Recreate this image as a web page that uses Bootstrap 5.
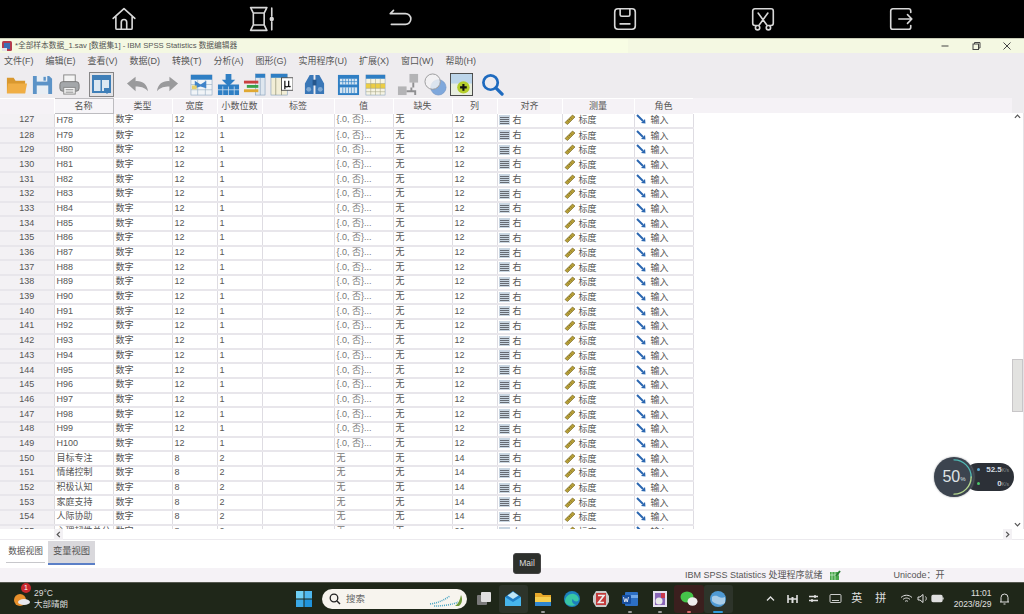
<!DOCTYPE html>
<html lang="zh-CN">
<head>
<meta charset="UTF-8">
<meta name="viewport" content="width=device-width, initial-scale=1">
<title>SPSS 变量视图</title>
<link href="https://cdn.jsdelivr.net/npm/bootstrap@5.3.0/dist/css/bootstrap.min.css" rel="stylesheet">
<style>
  html, body { height: 614px; overflow: hidden; }
  body {
    position: relative;
    width: 1024px;
    background: #fff;
    color: #4a4a4a;
    font-family: "Liberation Sans", "Noto Sans CJK SC", sans-serif;
    font-size: 9px;
    line-height: 1;
  }

  /* tablet key bar */
  .key-bar { height: 38px; background: #000; padding-left: 55px; }
  .key-item { width: 138px; }
  .key-item svg { width: 26px; height: 26px; fill: none; stroke: #d8d8d8; stroke-width: 1.5; stroke-linecap: round; stroke-linejoin: round; }
  .key-split { margin-left: 87px; }

  /* window chrome */
  .title-bar { height: 15px; background: linear-gradient(90deg, #f4f8e2 550px, #f8fde4 550px, #f8fde4 628px, #f4f8e2 628px); border-top: 1px solid #c9cdb8; padding-left: 1px; color: #555; font-size: 7.7px; }
  .title-bar .win-logo { width: 12px; height: 12px; margin-right: 2px; }
  .win-btns { margin-left: auto; margin-right: 2px; }
  .win-btn { width: 31px; }
  .win-btn svg { width: 10px; height: 10px; fill: none; stroke: #444; stroke-width: 1; }

  .app-top { background: #eeecef; height: 45px; }
  .menu-row { height: 17px; padding-left: 4px; gap: 12px; color: #555; font-size: 9px; }
  .tool-row { height: 28px; padding-left: 3px; }
  .tool-i { width: 26.5px; height: 28px; }
  .tool-i svg { width: 23px; height: 23px; }
  .tool-sel { margin-left: 6px; }
  .tool-sel svg { width: 25px; height: 25px; }
  .tool-g1 { margin-left: 9px; }
  .tool-redo { margin-left: 3.5px; }
  .tool-g2 { margin-left: 8px; }
  .tool-g3 { margin-left: 7px; }
  .tool-g4 { margin-left: 7.5px; }
  .tool-g5 { margin-left: 7px; }
  .tool-g6 { margin-left: 4px; }

  /* data grid */
  .grid-wrap { height: 431px; }
  .grid-main { width: 1012px; height: 431px; overflow: hidden; background: #fff; }
  .var-grid { table-layout: fixed; width: 693px; border-collapse: collapse; margin: 0; }
  .var-grid th {
    height: 15px;
    padding: 0;
    font-weight: 400;
    text-align: center;
    background: #f5f2f6;
    border-right: 1px solid #fff;
    color: #555;
    font-size: 9px;
  }
  .var-grid th.name-head { background: #f7f5f8; border: 1px solid #bdbcc0; }
  .head-fill { position: absolute; left: 693px; top: 98px; width: 319px; height: 15px; background: #f5f2f6; }
  .var-grid td {
    height: 14.7px;
    padding: 0 0 1px 2px;
    border-right: 1px solid #dedce2;
    border-bottom: 2px solid #e8e6eb;
    background: #fff;
    white-space: nowrap;
    overflow: hidden;
    color: #555;
    font-size: 9px;
  }
  .var-grid td.row-no { background: #f3f1f4; text-align: center; padding: 0 0 1px 0; color: #555; border-right: 1px solid #dcdade; }
  .var-grid td.val-cell { color: #777; }
  .var-grid td.ico-cell { padding-left: 1px; }
  .cell-ico { width: 11px; height: 10px; margin-right: 3px; vertical-align: -2px; }
  .cell-ico-m { width: 12px; height: 11px; margin-right: 3px; vertical-align: -2px; }

  .scroll-v { width: 12px; height: 431px; background: #fff; padding-top: 15px; border-right: 1px solid #e6e2e6; }
  .scroll-v .arrow { height: 7px; margin-bottom: 1px; }
  .scroll-v svg, .scroll-h svg { width: 7px; height: 7px; fill: none; stroke: #555; stroke-width: 1.4; }
  .scroll-corner { position: absolute; left: 1012px; top: 98px; width: 12px; height: 15px; background: #eeecef; }
  .thumb { height: 53px; background: #e2e2e0; border: 1px solid #c8c6c8; position: absolute; top: 359px; left: 1012px; width: 11px; }

  .scroll-h { height: 11px; background: #fff; padding-left: 54px; border-bottom: 1px solid #eceaee; }
  .scroll-h .end-arrow { margin-left: auto; margin-right: 12px; }
  .scroll-h .arrow-h { width: 9px; height: 11px; background: #f3f1f4; }

  /* sheet tabs */
  .sheet-tabs { height: 28px; padding: 1px 0 0 6px; background: #fff; }
  .sheet-tab { width: 39px; height: 22px; border-bottom: 1px solid #c7c7cb; color: #555; font-size: 8.7px; margin-right: 3px; }
  .sheet-tab.is-active { width: 47px; height: 24px; margin: 0; background: #d9d8dc; border-bottom: 2px solid #5b7fc7; font-size: 9.3px; }

  /* status bar */
  .status-row { height: 14px; background: #f5f2f6; padding-left: 685px; color: #555; font-size: 9px; }
  .status-row svg { width: 12px; height: 11px; margin-left: 6px; }
  .status-uni { margin-left: 53px; }

  /* windows taskbar */
  .task-bar { height: 32px; background: #1f2719; border-top: 1px solid #55584f; color: #e8e8e8; }
  .task-bar > * { flex-shrink: 0; }
  .weather { width: 296px; padding-left: 13px; position: relative; }
  .weather-ico { width: 18px; height: 18px; margin-right: 3px; }
  .weather-txt { font-size: 8.5px; color: #ddd; line-height: 11px; }
  .weather-badge { position: absolute; left: 21px; top: -5px; width: 10px; height: 10px; border-radius: 50%; background: #c8282e; color: #fff; font-size: 7px; }
  .win-start { width: 16px; height: 16px; margin-right: 10px; }
  .search-pill { width: 145px; height: 20px; background: #f7f4ee; border-radius: 10px; color: #666; font-size: 9.5px; padding: 0 3px 0 7px; }
  .search-pill svg { width: 12px; height: 12px; margin-right: 5px; }
  .search-pill .bing { margin: 0 0 0 auto; width: 36px; height: 16px; }
  .task-apps { margin-left: 2.35px; }
  .task-app { width: 29.3px; height: 28px; border-radius: 3px; position: relative; flex-shrink: 0; }
  .task-app svg { width: 18px; height: 18px; }
  .task-app.is-hover { background: #2d342a; }
  .task-app.is-wechat { background: #3b1f1e; }
  .task-app.is-globe { background: #2d342a; }
  .run-dot { position: absolute; bottom: 0; left: 50%; width: 4px; height: 2px; margin-left: -2px; background: #9b9b9b; border-radius: 1px; }
  .run-dot.dot-red { background: #d9686a; }
  .run-dot.dot-blue { width: 10px; margin-left: -5px; background: #2f9bdb; }
  .tray { margin-left: 27px; color: #e0e0e0; }
  .tray > * { flex-shrink: 0; }
  .tray-i { width: 21.5px; font-size: 11px; }
  .tray-i svg { width: 13px; height: 13px; fill: none; stroke: #e0e0e0; stroke-width: 1.3; }
  .tray-wide { width: 26.5px; margin-right: 4.75px; }
  .tray-tight { width: 15.5px; }
  .tray-time { width: 46.25px; text-align: right; font-size: 8.5px; line-height: 11px; white-space: nowrap; }
  .tray-bell { margin-left: 2.25px; }

  /* things floating over the page */
  .mail-tip {
    position: absolute; left: 513px; top: 553px; width: 28px; height: 21px;
    background: #2d302c; color: #ddd; border: 1px solid #444; border-radius: 3px; font-size: 8.5px;
  }
  .net-gauge { position: absolute; left: 934px; top: 456px; width: 80px; height: 41px; }
  .net-pill { position: absolute; left: 30px; top: 7px; width: 50px; height: 28px; background: #2c3037; border-radius: 14px; color: #d5dde2; font-size: 8px; font-weight: 700; }
  .net-line { height: 14px; padding: 0 5px 0 14px; }
  .net-line small { font-size: 5px; font-weight: 400; color: #8a9096; }
  .net-dot { position: absolute; left: 13px; width: 3px; height: 3px; border-radius: 50%; }
  .net-dot.dot-up { top: 5px; background: #5aa9d6; }
  .net-dot.dot-down { top: 19px; background: #4cc46a; }
  .net-circle { position: absolute; left: 0; top: 1px; width: 40px; height: 40px; background: #3c444f; border-radius: 50%; color: #dfe3e6; font-size: 16px; box-shadow: 0 0 2px #8b8f94; }
  .net-circle svg { position: absolute; left: 0; top: 0; width: 40px; height: 40px; fill: none; stroke-width: 1.4; stroke-linecap: round; }
  .net-circle small { font-size: 6px; margin-top: 4px; }
</style>
</head>
<body>

  <!-- tablet keys -->
  <div class="key-bar d-flex align-items-center">
    <div class="key-item d-flex justify-content-center">
      <svg viewBox="0 0 24 24"><path d="M2 11.500 12 2.500l10 9M4.500 10v10.500a1 1 0 0 0 1 1h13a1 1 0 0 0 1-1V10"/><path d="M9.500 21.500V15a2.500 2.500 0 0 1 5 0v6.500"/></svg>
    </div>
    <div class="key-item d-flex justify-content-center">
      <svg viewBox="0 0 24 24"><path d="M1.500 1.500h15M1.500 22.500h15M4 6.500h10M4 17.500h10M4 6.500 1.500 1.500M14 6.500l2.500-5M4 17.500l-2.500 5M14 17.500l2.500 5M4 6.500v11M14 6.500v11M21 2v7.500M21 14.500V22"/><circle cx="21" cy="12" r="1.300" fill="#d8d8d8"/></svg>
    </div>
    <div class="key-item d-flex justify-content-center">
      <svg viewBox="0 0 24 24"><path d="M3 7h14a4.500 4.500 0 0 1 0 10H4M3 7l3-3"/></svg>
    </div>
    <div class="key-item key-split d-flex justify-content-center">
      <svg viewBox="0 0 24 24"><rect x="2.500" y="2.500" width="19" height="19" rx="3"/><path d="M7.500 2.500v5.500a1.500 1.500 0 0 0 1.500 1.500h6A1.500 1.500 0 0 0 16.500 8V2.500M7.500 16.500h9"/></svg>
    </div>
    <div class="key-item d-flex justify-content-center">
      <svg viewBox="0 0 24 24"><path d="M6 18H4.500a2 2 0 0 1-2-2V4.500a2 2 0 0 1 2-2h15a2 2 0 0 1 2 2V16a2 2 0 0 1-2 2H18M7.500 6.500l8 11M16.500 6.500l-8 11"/><circle cx="7" cy="20" r="2"/><circle cx="17" cy="20" r="2"/></svg>
    </div>
    <div class="key-item d-flex justify-content-center">
      <svg viewBox="0 0 24 24"><path d="M21 6V4.500a2 2 0 0 0-2-2H4.500a2 2 0 0 0-2 2v15a2 2 0 0 0 2 2H19a2 2 0 0 0 2-2V18M10 12h12M18 8l4 4-4 4"/></svg>
    </div>
  </div>

  <!-- title bar -->
  <div class="title-bar d-flex align-items-center">
    <svg class="win-logo" viewBox="0 0 12 12"><rect x="1" y="1" width="10" height="10" rx="1.500" fill="#b33a4e"/><rect x="3" y="3" width="6" height="6" fill="#3b6fb5"/><rect x="1" y="8" width="5" height="3" fill="#e3e3ea"/></svg>
    <span>*全部样本数据_1.sav [数据集1] - IBM SPSS Statistics 数据编辑器</span>
    <div class="win-btns d-flex">
      <span class="win-btn d-flex justify-content-center"><svg viewBox="0 0 10 10"><path d="M1.500 5h7"/></svg></span>
      <span class="win-btn d-flex justify-content-center"><svg viewBox="0 0 10 10"><rect x="2" y="3" width="5.500" height="5.500"/><path d="M3.500 3V1.500H9V7H7.500"/></svg></span>
      <span class="win-btn d-flex justify-content-center"><svg viewBox="0 0 10 10"><path d="M1.500 1.500l7 7M8.500 1.500l-7 7"/></svg></span>
    </div>
  </div>

  <div class="app-top">
    <div class="menu-row d-flex align-items-center">
      <span>文件(F)</span><span>编辑(E)</span><span>查看(V)</span><span>数据(D)</span><span>转换(T)</span><span>分析(A)</span><span>图形(G)</span><span>实用程序(U)</span><span>扩展(X)</span><span>窗口(W)</span><span>帮助(H)</span>
    </div>
    <div class="tool-row d-flex">
      <div class="tool-i d-flex align-items-center justify-content-center">
        <svg viewBox="0 0 24 24"><path d="M2 5h7l2 3h10v13H2z" fill="#d9982f"/><path d="M2 21l1-10h20l-2 10z" fill="#f0ae45"/></svg>
      </div>
      <div class="tool-i d-flex align-items-center justify-content-center">
        <svg viewBox="0 0 24 24"><path d="M2 3h17l3 3v16H2z" fill="#5c93c7"/><rect x="6" y="3" width="11" height="6" fill="#e8eef4"/><rect x="13" y="4" width="2.500" height="4" fill="#5c93c7"/><rect x="6" y="13" width="12" height="9" fill="#e8eef4"/></svg>
      </div>
      <div class="tool-i d-flex align-items-center justify-content-center">
        <svg viewBox="0 0 24 24"><rect x="6" y="2" width="12" height="8" fill="#f4f4f4" stroke="#888"/><rect x="2" y="9" width="20" height="10" rx="3" fill="#a4a7aa" stroke="#777"/><rect x="6" y="15" width="12" height="7" fill="#f4f4f4" stroke="#888"/><path d="M8 17.500h8M8 20h8" stroke="#888"/></svg>
      </div>
      <div class="tool-i tool-sel d-flex align-items-center justify-content-center">
        <svg viewBox="0 0 25 25"><rect x=".5" y=".5" width="24" height="24" fill="#e3e3e6" stroke="#222" stroke-dasharray="1 1"/><rect x="3" y="3" width="19" height="18" fill="#3f7fb8"/><rect x="5" y="8" width="6.500" height="11" fill="#dbe8f2"/><rect x="13" y="8" width="7" height="11" fill="#dbe8f2"/><path d="M15 16h6v3l-3 3-3-3z" fill="#3f7fb8"/></svg>
      </div>
      <div class="tool-i tool-g1 d-flex align-items-center justify-content-center">
        <svg viewBox="0 0 24 24"><path d="M1 11l9-7v4.500c7-.5 12 3 13 10.500-4-4.500-8-5-13-5V19z" fill="#9a9a9c"/></svg>
      </div>
      <div class="tool-i tool-redo d-flex align-items-center justify-content-center">
        <svg viewBox="0 0 24 24"><path d="M23 11l-9-7v4.500C7 8 2 11.500 1 19c4-4.500 8-5 13-5V19z" fill="#9a9a9c"/></svg>
      </div>
      <div class="tool-i tool-g2 d-flex align-items-center justify-content-center">
        <svg viewBox="0 0 24 24"><rect x="1" y="2" width="22" height="21" fill="#f1f4f7" stroke="#8aa4bf" stroke-width=".6"/><rect x="1" y="2" width="22" height="5" fill="#2f7fc4"/><path d="M8 7v16M16 7v16M1 12h22M1 17.500h22" stroke="#9db4c8" stroke-width=".7"/><path d="M5 8l6 4 6-4v8l-6-2-6 2z" fill="#3f83c9"/><rect x="2" y="13" width="5" height="4" fill="#e6cf6a"/></svg>
      </div>
      <div class="tool-i d-flex align-items-center justify-content-center">
        <svg viewBox="0 0 24 24"><rect x="1" y="12" width="22" height="11" fill="#2f7fc4"/><path d="M1 17.500h22M6 14v9M12 14v9M18 14v9" stroke="#cfe0ee" stroke-width=".8"/><path d="M9 1h6v6h4l-7 7-7-7h4z" fill="#2f7fc4"/></svg>
      </div>
      <div class="tool-i d-flex align-items-center justify-content-center">
        <svg viewBox="0 0 24 24"><rect x="13" y="1" width="10" height="22" fill="#dfe7ef" stroke="#7e9ab6" stroke-width=".6"/><rect x="13" y="1" width="10" height="4" fill="#2f7fc4"/><path d="M1 8h15v3H1z" fill="#c9403f"/><path d="M4 12.500h12v3H4z" fill="#39a14a"/><path d="M1 17h15v3H1z" fill="#e0a832"/><path d="M18 5v18" stroke="#7e9ab6" stroke-width=".6"/></svg>
      </div>
      <div class="tool-i d-flex align-items-center justify-content-center">
        <svg viewBox="0 0 24 24"><rect x="1" y="1" width="17" height="22" fill="#f2eed6" stroke="#7e9ab6" stroke-width=".6"/><rect x="1" y="1" width="17" height="4" fill="#2f7fc4"/><path d="M6 5v18M12 5v18" stroke="#8c8c6d" stroke-width=".7"/><rect x="12" y="5" width="12" height="13" fill="#fff" stroke="#333" stroke-width=".8"/><path d="M15.500 17V8M15.500 13c0 2 4 2 4 0V8M19.500 13c0 1.500 1 1.500 2 1" fill="none" stroke="#111" stroke-width="1.300"/></svg>
      </div>
      <div class="tool-i tool-g3 d-flex align-items-center justify-content-center">
        <svg viewBox="0 0 24 24"><path d="M7 2h4v20H2V11zM13 2h4l5 9v11h-9z" fill="#3a77b7"/><rect x="10" y="7" width="4" height="6" fill="#26578c"/><circle cx="6" cy="17" r="2.500" fill="#7fa9d3"/><circle cx="18" cy="17" r="2.500" fill="#7fa9d3"/></svg>
      </div>
      <div class="tool-i tool-g4 d-flex align-items-center justify-content-center">
        <svg viewBox="0 0 24 24"><rect x="1" y="2" width="22" height="21" fill="#2f7fc4"/><rect x="3" y="6" width="18" height="6" fill="#d7e6f2"/><path d="M6 6v6M9 6v6M12 6v6M15 6v6M18 6v6M3 9h18" stroke="#2f7fc4" stroke-width=".7"/><rect x="3" y="15" width="18" height="6" fill="#d7e6f2"/><path d="M6 15v6M9 15v6M12 15v6M15 15v6M18 15v6" stroke="#2f7fc4" stroke-width=".7"/></svg>
      </div>
      <div class="tool-i d-flex align-items-center justify-content-center">
        <svg viewBox="0 0 24 24"><rect x="2" y="2" width="20" height="21" fill="#f6f4e4" stroke="#8aa4bf" stroke-width=".6"/><rect x="2" y="2" width="20" height="4" fill="#2f7fc4"/><rect x="2" y="11" width="20" height="5" fill="#ecce45"/><path d="M7 6v17M12 6v17M17 6v17M2 11h20M2 16h20M2 19.500h20" stroke="#a7a789" stroke-width=".6"/></svg>
      </div>
      <div class="tool-i tool-g5 d-flex align-items-center justify-content-center">
        <svg viewBox="0 0 24 24"><rect x="13" y="1" width="9" height="9" fill="#b4b4b6"/><rect x="1" y="14" width="9" height="9" fill="#b4b4b6"/><path d="M10 19h5M15 19v-4M15 19h4v4M17 10v5" stroke="#8f8f91" stroke-width="2" fill="none"/></svg>
      </div>
      <div class="tool-i d-flex align-items-center justify-content-center">
        <svg viewBox="0 0 24 24"><circle cx="15" cy="15" r="8" fill="#7fa8dc" stroke="#6f93c4" stroke-width=".7"/><circle cx="9" cy="9" r="8" fill="#f2f2f4" fill-opacity=".8" stroke="#9a9a9c"/></svg>
      </div>
      <div class="tool-i d-flex align-items-center justify-content-center">
        <svg viewBox="0 0 24 24"><rect x=".5" y=".5" width="23" height="23" fill="#e8eee0" stroke="#444"/><rect x="1" y="1" width="22" height="10" fill="#bcd5ea"/><circle cx="14" cy="15" r="6.500" fill="#b5ce2c"/><path d="M14 11.500v7M10.500 15h7" stroke="#111" stroke-width="2.200"/></svg>
      </div>
      <div class="tool-i tool-g6 d-flex align-items-center justify-content-center">
        <svg viewBox="0 0 24 24"><circle cx="10" cy="10" r="7.500" fill="none" stroke="#1f6bbf" stroke-width="2.800"/><path d="M15.500 15.500 22 22" stroke="#1f6bbf" stroke-width="3.400" stroke-linecap="round"/></svg>
      </div>
    </div>
  </div>

  <!-- variable grid -->
  <div class="grid-wrap d-flex">
    <div class="grid-main">
      <table class="var-grid">
        <colgroup>
          <col><col><col><col><col><col><col><col><col><col><col><col>
        </colgroup>
        <thead>
          <tr>
            <th></th><th class="name-head">名称</th><th>类型</th><th>宽度</th><th>小数位数</th><th>标签</th><th>值</th><th>缺失</th><th>列</th><th>对齐</th><th>测量</th><th>角色</th>
          </tr>
        </thead>
        <tbody id="varRows"></tbody>
      </table>
    </div>
    <div class="scroll-v d-flex flex-column">
      <div class="arrow d-flex align-items-center justify-content-center"><svg viewBox="0 0 8 8"><path d="M1 5.500 4 2.500l3 3"/></svg></div>
      <div class="arrow mt-auto d-flex align-items-center justify-content-center"><svg viewBox="0 0 8 8"><path d="M1 2.500 4 5.500l3-3"/></svg></div>
    </div>
  </div>
  <div class="head-fill"></div>
  <div class="scroll-corner"></div>
  <div class="thumb"></div>

  <div class="scroll-h d-flex">
    <span class="arrow-h d-flex align-items-center justify-content-center"><svg viewBox="0 0 8 8"><path d="M5.500 1 2.500 4l3 3"/></svg></span>
    <span class="arrow-h end-arrow d-flex align-items-center justify-content-center"><svg viewBox="0 0 8 8"><path d="M2.500 1l3 3-3 3"/></svg></span>
  </div>

  <div class="sheet-tabs d-flex">
    <div class="sheet-tab d-flex align-items-center justify-content-center">数据视图</div>
    <div class="sheet-tab is-active d-flex align-items-center justify-content-center">变量视图</div>
  </div>

  <div class="status-row d-flex align-items-center">
    <span>IBM SPSS Statistics 处理程序就绪</span>
    <svg viewBox="0 0 12 11"><rect x="1" y="2" width="9" height="8" fill="#49a84c"/><path d="M3 2v8M6 2v8M1 5h9" stroke="#d2eed2" stroke-width=".7"/><path d="M7 6l4-5" stroke="#2a7d33" stroke-width="2"/></svg>
    <span class="status-uni">Unicode：开</span>
  </div>

  <!-- taskbar -->
  <div class="task-bar d-flex align-items-center">
    <div class="weather d-flex align-items-center">
      <svg class="weather-ico" viewBox="0 0 18 18"><circle cx="7" cy="10" r="6" fill="#e8902c"/><ellipse cx="11" cy="12" rx="6" ry="3" fill="#e8e8ef"/></svg>
      <span class="weather-badge d-flex align-items-center justify-content-center">1</span>
      <div class="weather-txt"><div>29°C</div><div>大部晴朗</div></div>
    </div>
    <svg class="win-start" viewBox="0 0 16 16"><rect width="7.500" height="7.500" fill="#6fd0f5"/><rect x="8.500" width="7.500" height="7.500" fill="#4fb8ee"/><rect y="8.500" width="7.500" height="7.500" fill="#3aa8e6"/><rect x="8.500" y="8.500" width="7.500" height="7.500" fill="#1f93dc"/></svg>
    <div class="search-pill d-flex align-items-center">
      <svg viewBox="0 0 12 12"><circle cx="5" cy="5" r="3.800" fill="none" stroke="#222" stroke-width="1.300"/><path d="M8 8l3 3" stroke="#222" stroke-width="1.400"/></svg>
      <span>搜索</span>
      <svg class="bing" viewBox="0 0 36 16"><path d="M2 13c8-1 14-4 20-8M6 15c8 0 18-1 24-4" stroke="#4aa5c4" stroke-width="1.500" stroke-dasharray="1 1" fill="none"/><path d="M27 15c3-2 5-6 6-11 2 4 1 9-2 11z" fill="#6f9a3a"/></svg>
    </div>
    <div class="task-apps d-flex align-items-center">
      <div class="task-app d-flex align-items-center justify-content-center">
        <svg viewBox="0 0 18 18"><rect x="2" y="5" width="10" height="10" rx="1" fill="#7a7a7a"/><rect x="6" y="2" width="10" height="10" rx="1" fill="#dfdfdf"/></svg>
      </div>
      <div class="task-app is-hover d-flex align-items-center justify-content-center">
        <svg viewBox="0 0 18 18"><path d="M1 7l8-6 8 6v9H1z" fill="#1f7fc8"/><path d="M1 7l8 5 8-5v9H1z" fill="#47b5ec"/><path d="M3.500 5.500 9 1.800l5.500 3.700L9 9z" fill="#bfe6f7"/></svg>
      </div>
      <div class="task-app d-flex align-items-center justify-content-center">
        <svg viewBox="0 0 18 18"><path d="M1 3h6l2 2h8v11H1z" fill="#e6a82a"/><rect x="1" y="7" width="16" height="9" fill="#f6ce4e"/><rect x="1" y="12" width="16" height="4" fill="#2f86cf"/></svg>
        <i class="run-dot"></i>
      </div>
      <div class="task-app d-flex align-items-center justify-content-center">
        <svg viewBox="0 0 18 18"><circle cx="9" cy="9" r="8" fill="#1c7fbe"/><path d="M2 12C2 6 7 3 11 4c4 1 6 5 4 7-2 1-5 0-5-2-2 1-1 5 3 6-5 2-10 0-11-3z" fill="#38c6a5"/></svg>
      </div>
      <div class="task-app d-flex align-items-center justify-content-center">
        <svg viewBox="0 0 18 18"><path d="M4 1h10l3 5v6l-3 5H4l-3-5V6z" fill="#c9c9c9"/><rect x="4" y="3" width="10" height="12" fill="#c23a3a"/><path d="M6 5.500h6L6.500 12.500H12" fill="none" stroke="#eee" stroke-width="1.600"/></svg>
      </div>
      <div class="task-app d-flex align-items-center justify-content-center">
        <svg viewBox="0 0 18 18"><rect x="4" y="2" width="13" height="14" rx="1" fill="#2c6fc4"/><rect x="8" y="5" width="9" height="3" fill="#70a8e8"/><rect x="1" y="5" width="9" height="9" rx="1" fill="#174e9f"/><path d="M2.500 7l1.300 5 1.200-3.500L6.200 12l1.300-5" fill="none" stroke="#fff" stroke-width=".8"/></svg>
        <i class="run-dot"></i>
      </div>
      <div class="task-app d-flex align-items-center justify-content-center">
        <svg viewBox="0 0 18 18"><rect x="2" y="1" width="14" height="16" fill="#e5e0ee"/><rect x="4" y="3" width="10" height="12" fill="#8a66b8"/><circle cx="8" cy="11" r="3.500" fill="#e9e9e9"/><rect x="10" y="3" width="4" height="5" fill="#c9384c"/></svg>
        <i class="run-dot"></i>
      </div>
      <div class="task-app is-wechat d-flex align-items-center justify-content-center">
        <svg viewBox="0 0 18 18"><ellipse cx="7" cy="7" rx="6.500" ry="5.500" fill="#45c44a"/><ellipse cx="12.500" cy="11.500" rx="5" ry="4.200" fill="#eeeeee"/></svg>
        <i class="run-dot dot-red"></i>
      </div>
      <div class="task-app is-globe d-flex align-items-center justify-content-center">
        <svg viewBox="0 0 18 18"><circle cx="9" cy="9" r="8" fill="#4f9ad4"/><path d="M3 7c3-2 5-1 7 0s4 1 6 0v6c-3 2-5 2-8 1s-4-2-5-3z" fill="#a9cde8"/></svg>
        <i class="run-dot dot-blue"></i>
      </div>
    </div>
    <div class="tray d-flex align-items-center">
      <span class="tray-i d-flex justify-content-center"><svg viewBox="0 0 13 13"><path d="M3 8.500l3.500-3.500L10 8.500"/></svg></span>
      <span class="tray-i d-flex justify-content-center"><svg viewBox="0 0 13 13"><path d="M2 3v8M11 3v8M2 7h9" stroke-width="1.600"/><path d="M6.500 5v6" stroke-width="2"/></svg></span>
      <span class="tray-i d-flex justify-content-center"><svg viewBox="0 0 13 13"><path d="M2 4.500h9M2 8.500h9M8 3v3M5 7v3" stroke-width="1.500"/></svg></span>
      <span class="tray-i d-flex justify-content-center"><svg viewBox="0 0 13 13"><rect x="1" y="2.500" width="11" height="8" rx="1" stroke-width=".9"/><path d="M3 8.500h7" stroke-width=".9"/></svg></span>
      <span class="tray-i d-flex justify-content-center">英</span>
      <span class="tray-i tray-wide d-flex justify-content-center">拼</span>
      <span class="tray-tight tray-i d-flex justify-content-center"><svg viewBox="0 0 13 13"><path d="M1 5.500c3-3 8-3 11 0M3 7.500c2-2 5-2 7 0M5 9.500c1-1 2-1 3 0" stroke-width="1"/></svg></span>
      <span class="tray-tight tray-i d-flex justify-content-center"><svg viewBox="0 0 13 13"><path d="M2 5v3h2l3 2.500v-8L4 5zM9.500 4.500c1 1 1 3 0 4" stroke-width="1"/></svg></span>
      <span class="tray-tight tray-i d-flex justify-content-center"><svg viewBox="0 0 13 13"><rect x="1" y="3.500" width="10" height="6" rx="1" fill="#e0e0e0"/><path d="M12 5.500v2"/></svg></span>
      <div class="tray-time"><div>11:01</div><div>2023/8/29</div></div>
      <span class="tray-i tray-bell d-flex justify-content-center"><svg viewBox="0 0 13 13"><path d="M2 10h9M3 10V5.500a3.500 3.500 0 0 1 7 0V10M5.500 12h2" stroke-width="1"/></svg></span>
    </div>
  </div>

  <!-- overlays -->
  <div class="mail-tip d-flex align-items-center justify-content-center">Mail</div>
  <div class="net-gauge">
    <div class="net-pill">
      <i class="net-dot dot-up"></i>
      <div class="net-line d-flex align-items-center justify-content-end"><span>52.5<small>K/s</small></span></div>
      <i class="net-dot dot-down"></i>
      <div class="net-line d-flex align-items-center justify-content-end"><span>0<small>K/s</small></span></div>
    </div>
    <div class="net-circle d-flex align-items-center justify-content-center">
      <svg viewBox="0 0 42 42"><path d="M21 3a18 18 0 0 1 18 18" stroke="#4fb9b4"/><path d="M39 21a18 18 0 0 1-18 18" stroke="#b6d98f"/></svg>
      <span>50</span><small>%</small>
    </div>
  </div>

  <script src="https://cdn.jsdelivr.net/npm/bootstrap@5.3.0/dist/js/bootstrap.bundle.min.js"></script>
  <script>
    // column widths of the grid
    const colWidths = [54, 59, 59, 45, 45, 72, 59, 59, 45, 65, 72, 59];
    document.querySelectorAll(".var-grid col").forEach((c, i) => { c.style.width = colWidths[i] + "px"; });

    const alignIco = '<svg class="cell-ico" viewBox="0 0 11 10"><rect width="11" height="10" fill="#c9d6e2"/><path d="M1 2.500h9M1 4.500h9M1 6.500h9M1 8.500h9" stroke="#5a5f66" stroke-width=".9"/></svg>';
    const rulerIco = '<svg class="cell-ico-m" viewBox="0 0 12 11"><path d="M1 8.500 8.500 1 11 3 3.500 10.500z" fill="#b8a038" stroke="#6b5c1f" stroke-width=".6"/><path d="M3.500 6.500l1 1M5 5l1 1M6.500 3.500l1 1" stroke="#5c4f1a" stroke-width=".6"/></svg>';
    const inputIco = '<svg class="cell-ico-m" viewBox="0 0 12 11"><path d="M1 1 7 7" stroke="#2a66b0" stroke-width="2"/><path d="M9.500 9.500 5 9l4-4z" fill="#2a66b0"/></svg>';

    const named = ["目标专注", "情绪控制", "积极认知", "家庭支持", "人际协助", "心理韧性总分"];
    const rows = [];
    for (let n = 127; n <= 155; n++) {
      const isH = n < 150;
      const name = isH ? "H" + (n - 49) : named[n - 150];
      const width = isH ? 12 : 8;
      const dec = isH ? 1 : 2;
      const value = isH ? "{.0, 否}..." : "无";
      const col = isH ? 12 : (n === 155 ? 20 : 14);
      rows.push(`<tr><td class="row-no">${n}</td><td>${name}</td><td>数字</td><td>${width}</td><td>${dec}</td><td></td><td class="val-cell">${value}</td><td>无</td><td>${col}</td><td class="ico-cell">${alignIco}右</td><td class="ico-cell">${rulerIco}标度</td><td class="ico-cell">${inputIco}输入</td></tr>`);
    }
    document.getElementById("varRows").innerHTML = rows.join("");
  </script>
</body>
</html>
